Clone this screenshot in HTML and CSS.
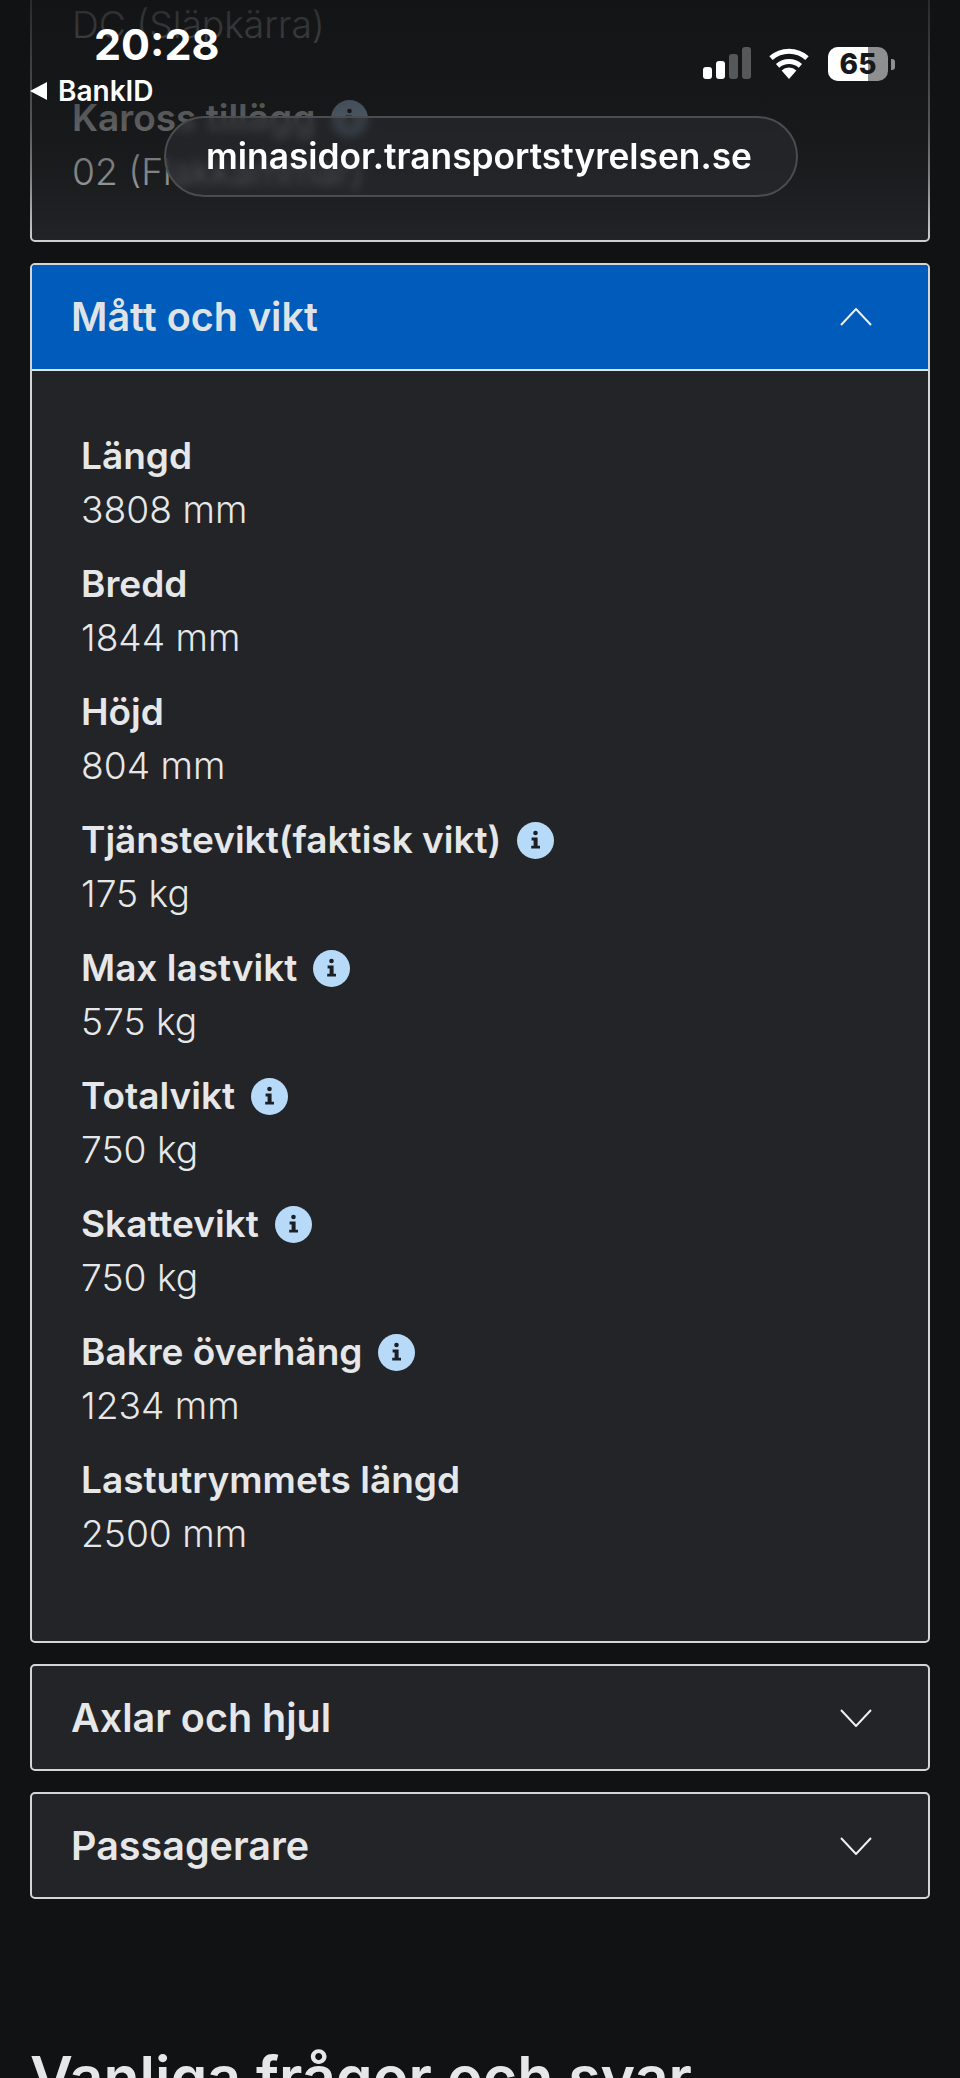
FILE: index.html
```html
<!DOCTYPE html>
<html lang="sv">
<head>
  <meta charset="UTF-8">
  <meta name="viewport" content="width=device-width, initial-scale=1.0">
  <title>Mått och vikt</title>
  <link rel="stylesheet" href="styles.css">
</head>
<body>
  <svg class="sprite" width="0" height="0">
    <symbol id="info" viewBox="0 0 37 37">
      <circle cx="18.5" cy="18.5" r="18.5" fill="#b8daf9"/>
      <circle cx="18.5" cy="11" r="2.3" fill="#1c2026"/>
      <path d="M14.6 15.6h6v8.2h2.4v2.8h-8.8v-2.8h2.4v-5.4h-2z" fill="#1c2026"/>
    </symbol>
    <symbol id="chevron" viewBox="0 0 32 18">
      <path d="M1 17 16 1l15 16" fill="none" stroke="currentColor" stroke-width="2"/>
    </symbol>
  </svg>

  <div class="page">
    <section class="card card-partial">
      <div class="fields">
        <div class="field">
          <div class="value">DC (Släpkärra)</div>
        </div>
        <div class="field">
          <div class="label">Kaross tillägg <svg class="info"><use href="#info"/></svg></div>
          <div class="value">02 (Flakkammar)</div>
        </div>
      </div>
    </section>

    <section class="card">
      <div class="card-head card-head-open">
        <span>Mått och vikt</span>
        <svg class="chevron"><use href="#chevron"/></svg>
      </div>
      <div class="fields fields-body">
        <div class="field"><div class="label">Längd</div><div class="value">3808 mm</div></div>
        <div class="field"><div class="label">Bredd</div><div class="value">1844 mm</div></div>
        <div class="field"><div class="label">Höjd</div><div class="value">804 mm</div></div>
        <div class="field"><div class="label">Tjänstevikt(faktisk vikt) <svg class="info"><use href="#info"/></svg></div><div class="value">175 kg</div></div>
        <div class="field"><div class="label">Max lastvikt <svg class="info"><use href="#info"/></svg></div><div class="value">575 kg</div></div>
        <div class="field"><div class="label">Totalvikt <svg class="info"><use href="#info"/></svg></div><div class="value">750 kg</div></div>
        <div class="field"><div class="label">Skattevikt <svg class="info"><use href="#info"/></svg></div><div class="value">750 kg</div></div>
        <div class="field"><div class="label">Bakre överhäng <svg class="info"><use href="#info"/></svg></div><div class="value">1234 mm</div></div>
        <div class="field"><div class="label">Lastutrymmets längd</div><div class="value">2500 mm</div></div>
      </div>
    </section>

    <section class="card">
      <div class="card-head">
        <span>Axlar och hjul</span>
        <svg class="chevron chevron-down"><use href="#chevron"/></svg>
      </div>
    </section>

    <section class="card">
      <div class="card-head">
        <span>Passagerare</span>
        <svg class="chevron chevron-down"><use href="#chevron"/></svg>
      </div>
    </section>

    <h2 class="faq-title">Vanliga frågor och svar</h2>
  </div>

  <!-- ios chrome on top of the page -->
  <div class="top-fade"></div>
  <div class="status-bar">
    <div class="status-left">
      <div class="clock">20:28</div>
      <div class="back"><span class="back-arrow"></span>BankID</div>
    </div>
    <div class="status-right">
      <div class="signal">
        <span class="bar bar-1"></span>
        <span class="bar bar-2"></span>
        <span class="bar bar-3 bar-off"></span>
        <span class="bar bar-4 bar-off"></span>
      </div>
      <svg class="wifi" viewBox="0 0 42 32">
        <path d="M21 32 13.6 23.4a11 11 0 0 1 14.8 0z" fill="#fff"/>
        <path d="M9.6 18.8a17.4 17.4 0 0 1 22.8 0" fill="none" stroke="#fff" stroke-width="5"/>
        <path d="M3 11.2a27 27 0 0 1 36 0" fill="none" stroke="#fff" stroke-width="5"/>
      </svg>
      <div class="battery">
        <div class="battery-body"><span class="battery-level"></span><span class="battery-text">65</span></div>
        <span class="battery-nub"></span>
      </div>
    </div>
  </div>
  <div class="url-pill">minasidor.transportstyrelsen.se</div>
</body>
</html>
```

FILE: styles.css
```css
* {
  box-sizing: border-box;
}
body {
  margin: 0;
  background: #111213;
  color: #e6e7e8;
  font-family: 'Inter', 'Liberation Sans', sans-serif;
  height: 2078px;
  overflow: hidden;
  position: relative;
}
.sprite {
  position: absolute;
}
.page {
  padding: 0 30px;
  margin-top: -40px;
}
.card {
  background: #222427;
  border: 2px solid #d4d5d6;
  border-radius: 5px;
  margin-bottom: 21px;
  overflow: hidden;
}
.card-partial {
  padding: 36px 40px 41px;
}
.card-head {
  display: flex;
  align-items: center;
  justify-content: space-between;
  height: 103px;
  padding: 0 56px 0 39px;
  font-size: 39.5px;
  font-weight: 600;
  color: #e6e7e8;
}
.card-head-open {
  background: #005bbb;
  height: 106px;
  border-bottom: 2px solid #dfe6ee;
  color: #dfe3e8;
}
.chevron {
  width: 32px;
  height: 18px;
  color: #f0f0f0;
}
.chevron-down {
  transform: rotate(180deg);
}
.fields {
  display: flex;
  flex-direction: column;
  gap: 39px;
}
.fields-body {
  gap: 20px;
  padding: 58px 49px 80px;
}
.field {
  line-height: 54px;
}
.label {
  display: flex;
  align-items: center;
  gap: 16px;
  font-size: 37px;
  font-weight: 600;
  height: 54px;
}
.value {
  font-size: 37.2px;
  font-weight: 300;
  height: 54px;
}
.info {
  width: 37px;
  height: 37px;
  flex: none;
}
.faq-title {
  margin: 145px 0 0;
  font-size: 59px;
  font-weight: 600;
  line-height: 68px;
  color: #e6e7e8;
}
.top-fade {
  position: absolute;
  top: 0;
  left: 0;
  right: 0;
  height: 245px;
  background: linear-gradient(180deg, rgba(17, 18, 19, 0.88) 0%, rgba(17, 18, 19, 0.66) 50%, rgba(17, 18, 19, 0.45) 72%, rgba(17, 18, 19, 0) 100%);
}
.status-bar {
  position: absolute;
  top: 23px;
  left: 30px;
  right: 65px;
  display: flex;
  justify-content: space-between;
  align-items: flex-start;
  color: #fff;
}
.status-left {
  display: flex;
  flex-direction: column;
}
.clock {
  font-size: 43px;
  font-weight: 700;
  line-height: 42px;
  padding-left: 64px;
}
.back {
  display: flex;
  align-items: center;
  gap: 11px;
  margin-top: 11px;
  font-size: 28px;
  font-weight: 600;
  line-height: 30px;
}
.back-arrow {
  width: 0;
  height: 0;
  border-top: 9px solid transparent;
  border-bottom: 9px solid transparent;
  border-right: 17px solid #fff;
}
.status-right {
  display: flex;
  align-items: flex-start;
  padding-top: 24px;
}
.signal {
  display: flex;
  align-items: flex-end;
  gap: 4px;
  height: 32px;
  margin-right: 17px;
}
.bar {
  width: 9px;
  border-radius: 3px;
  background: #fff;
}
.bar-1 { height: 12px; }
.bar-2 { height: 18px; }
.bar-3 { height: 25px; }
.bar-4 { height: 32px; }
.bar-off {
  background: #565758;
}
.wifi {
  width: 42px;
  height: 32px;
  margin-right: 18px;
}
.battery {
  display: flex;
  align-items: center;
  gap: 3px;
  height: 34px;
}
.battery-body {
  position: relative;
  width: 60px;
  height: 34px;
  border-radius: 10px;
  background: #8f8f8f;
  overflow: hidden;
  display: flex;
  align-items: center;
  justify-content: center;
}
.battery-level {
  position: absolute;
  top: 0;
  bottom: 0;
  left: 0;
  width: 40px;
  background: #fff;
}
.battery-text {
  position: relative;
  font-size: 28px;
  font-weight: 800;
  color: #17181a;
}
.battery-nub {
  width: 4px;
  height: 11px;
  border-radius: 0 3px 3px 0;
  background: #8f8f8f;
}
.url-pill {
  position: absolute;
  top: 116px;
  left: 164px;
  width: 634px;
  height: 81px;
  border: 2px solid #4a4c50;
  border-radius: 41px;
  background: rgba(42, 44, 48, 0.6);
  backdrop-filter: blur(4px);
  color: #fff;
  font-size: 35.3px;
  font-weight: 600;
  display: flex;
  align-items: center;
  justify-content: center;
  padding-right: 4px;
}
```
